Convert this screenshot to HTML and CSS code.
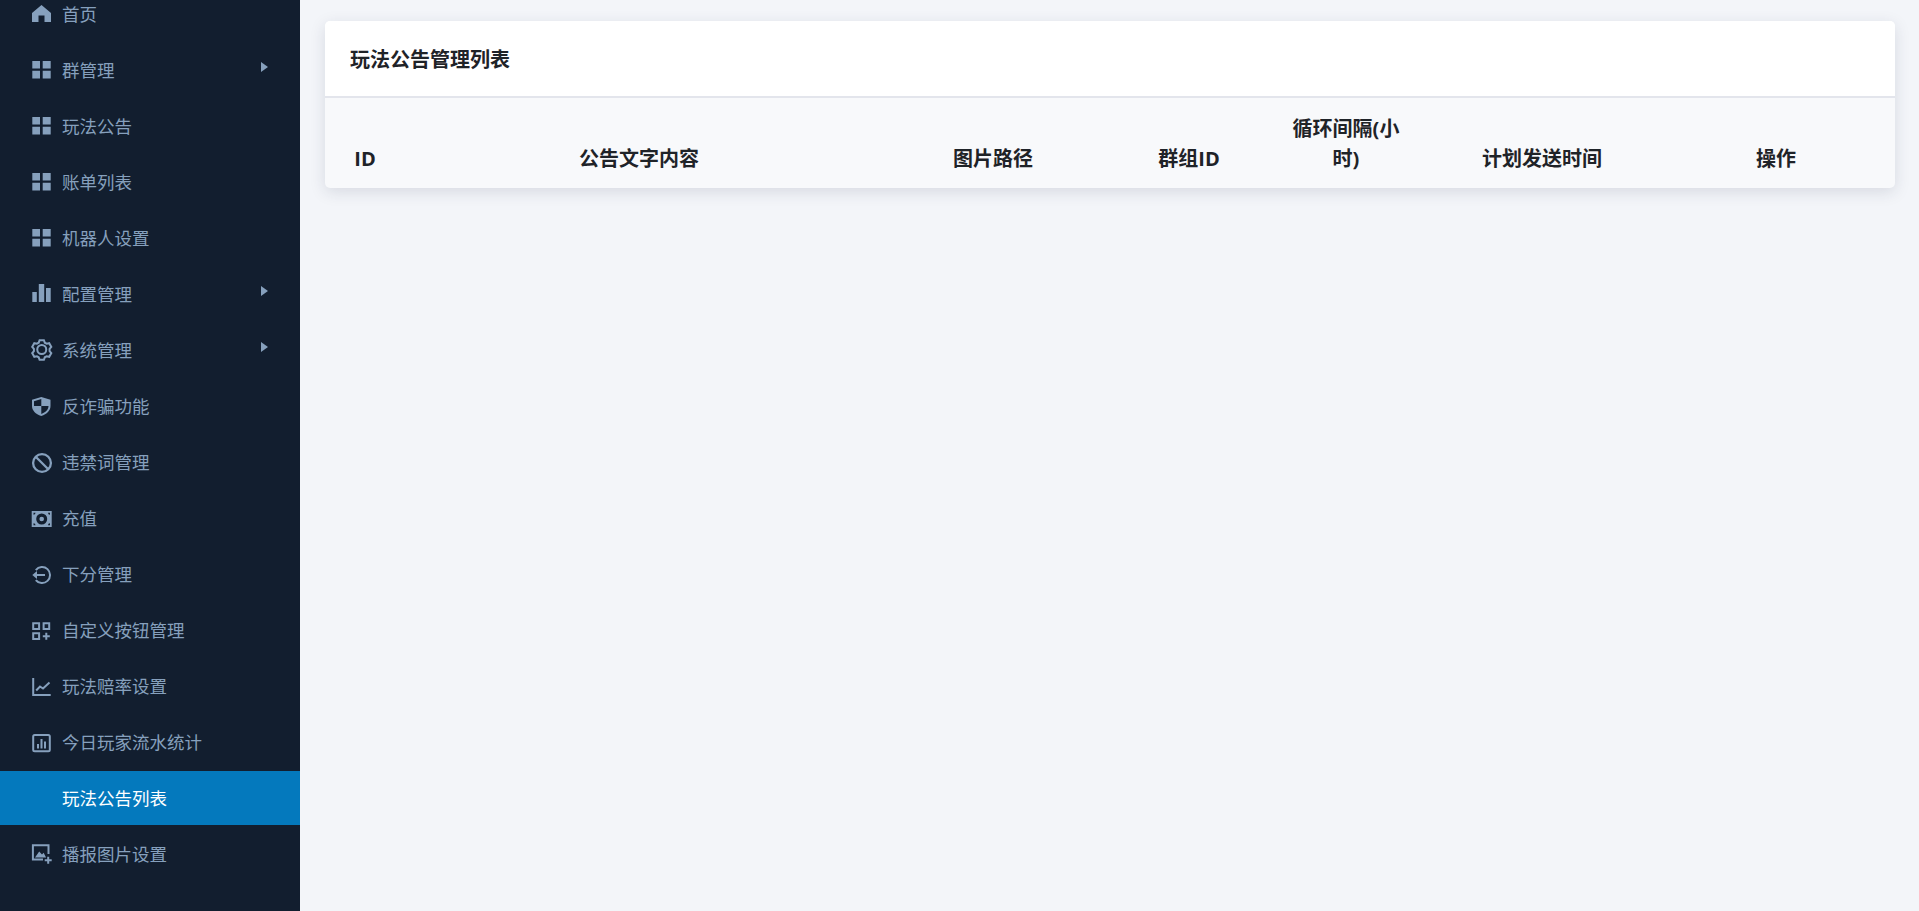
FILE: index.html
```html
<!DOCTYPE html>
<html lang="zh-CN">
<head>
<meta charset="utf-8">
<title>玩法公告管理列表</title>
<link rel="stylesheet" href="styles.css">
</head>
<body>
<div class="layout">
  <aside class="sidebar">
    <ul class="menu">
      <li class="item"><svg class="icon" viewBox="0 0 20 20"><path class="fill" fill-rule="evenodd" d="M9.500 2 19 10v9h-6.500v-6.500h-6V19H0V10Z"/></svg><span class="label">首页</span></li>
      <li class="item"><svg class="icon" viewBox="0 0 20 20"><path class="fill" d="M.3 2H8v7.500H.3zM10.700 2h8v7.500h-8zM.3 11.700H8v7.800H.3zM10.700 11.700h8v7.800h-8z"/></svg><span class="label">群管理</span><i class="caret"></i></li>
      <li class="item"><svg class="icon" viewBox="0 0 20 20"><path class="fill" d="M.3 2H8v7.500H.3zM10.700 2h8v7.500h-8zM.3 11.700H8v7.800H.3zM10.700 11.700h8v7.800h-8z"/></svg><span class="label">玩法公告</span></li>
      <li class="item"><svg class="icon" viewBox="0 0 20 20"><path class="fill" d="M.3 2H8v7.500H.3zM10.700 2h8v7.500h-8zM.3 11.700H8v7.800H.3zM10.700 11.700h8v7.800h-8z"/></svg><span class="label">账单列表</span></li>
      <li class="item"><svg class="icon" viewBox="0 0 20 20"><path class="fill" d="M.3 2H8v7.500H.3zM10.700 2h8v7.500h-8zM.3 11.700H8v7.800H.3zM10.700 11.700h8v7.800h-8z"/></svg><span class="label">机器人设置</span></li>
      <li class="item"><svg class="icon" viewBox="0 0 20 20"><path class="fill" d="M.3 9h4.500v10H.3zM6.800 1h5.400v18H6.800zM14 5h4.700v14H14z"/></svg><span class="label">配置管理</span><i class="caret"></i></li>
      <li class="item"><svg class="icon" viewBox="0 0 20 20"><path class="line" d="M7.600 1.200h4.300l.9 2.500 1.800 1 2.600-.5 2.100 3.700-1.700 2 0 2.200 1.700 2-2.100 3.700-2.600-.5-1.800 1-.9 2.500H7.600l-.9-2.500-1.800-1-2.600.5-2.100-3.700 1.700-2 0-2.200-1.700-2 2.100-3.700 2.600.5 1.800-1z"/><circle class="line" cx="9.750" cy="10.500" r="4.500"/></svg><span class="label">系统管理</span><i class="caret"></i></li>
      <li class="item"><svg class="icon" viewBox="0 0 20 20"><path class="fill" fill-rule="evenodd" d="M9.300 2 18.500 4.700V11c0 4.500-3.500 8-9.200 10C3.500 19 0 15.500 0 11V4.700ZM9.300 4 2 6.200V11H9.300ZM9.300 11V19C13.500 17.500 16.500 14.500 16.500 11Z"/></svg><span class="label">反诈骗功能</span></li>
      <li class="item"><svg class="icon" viewBox="0 0 20 20"><circle class="line thick" cx="10" cy="12" r="8.900"/><path class="line thick" d="M3.700 5.700 16.300 18.300"/></svg><span class="label">违禁词管理</span></li>
      <li class="item"><svg class="icon" viewBox="0 0 20 20"><path class="fill" fill-rule="evenodd" d="M-.3 4h20v16h-20zM9.700 6.500a5.500 5.500 0 1 0 0 11 5.500 5.500 0 0 0 0-11zM9.700 9.700a2.300 2.300 0 1 1 0 4.600 2.300 2.300 0 0 1 0-4.600zM1.500 5.800v2a2 2 0 0 0 2-2zM16 5.800a2 2 0 0 0 2 2v-2zM1.500 16.200v2h2a2 2 0 0 0-2-2zM18 16.200a2 2 0 0 0-2 2h2z"/></svg><span class="label">充值</span></li>
      <li class="item"><svg class="icon" viewBox="0 0 20 20"><path class="line" d="M3.800 7A8 8 0 1 1 3.800 17"/><path class="line" d="M3 12h10"/><path class="fill" d="M.3 12 5 8v8z"/></svg><span class="label">下分管理</span></li>
      <li class="item"><svg class="icon" viewBox="0 0 20 20"><path class="line" d="M1.200 4.200h5.900v5.900H1.200zM11.600 4.200h5.600v5.900h-5.600zM1.200 14.200h5.900v5.900H1.200z"/><path class="line" d="M10.800 17.200h7M14.300 13.800v7"/></svg><span class="label">自定义按钮管理</span></li>
      <li class="item"><svg class="icon" viewBox="0 0 20 20"><path class="line" d="M1.200 3v17h17.500"/><path class="line" d="M4.200 15.500 8 11.500l3 2 6.500-6"/></svg><span class="label">玩法赔率设置</span></li>
      <li class="item"><svg class="icon" viewBox="0 0 20 20"><rect class="line" x="1.200" y="4" width="16.600" height="16.200" rx="1.500"/><path class="fill" d="M5 13h2v4.500H5zM8.500 8h2v9.500h-2zM12 10.500h2v7h-2z"/></svg><span class="label">今日玩家流水统计</span></li>
      <li class="item active"><span class="label">玩法公告列表</span></li>
      <li class="item"><svg class="icon" viewBox="0 0 20 20"><path class="line" d="M16.500 11V2.200H.9v14.300H11"/><path class="fill" d="M3 14.500l4.200-6 2.800 3 1.600-1.700 2.500 4.700z"/><path class="line" d="M12.700 17.200h7M16.200 13.700v7"/></svg><span class="label">播报图片设置</span></li>
    </ul>
  </aside>
  <main class="content">
    <section class="card">
      <header class="card-head"><h1 class="card-title">玩法公告管理列表</h1></header>
      <table class="data">
        <colgroup>
          <col class="c-id"><col class="c-text"><col class="c-path"><col class="c-group"><col class="c-loop"><col class="c-time"><col class="c-op">
        </colgroup>
        <thead>
          <tr>
            <th>ID</th>
            <th>公告文字内容</th>
            <th>图片路径</th>
            <th>群组ID</th>
            <th>循环间隔(小时)</th>
            <th>计划发送时间</th>
            <th>操作</th>
          </tr>
        </thead>
      </table>
    </section>
  </main>
</div>
</body>
</html>
```
FILE: styles.css
```css
* { box-sizing: border-box; }
html, body { margin: 0; height: 100%; overflow: hidden; }
body {
  font-family: "Open Sans", "Noto Sans CJK SC", sans-serif;
  background: #f3f5f9;
  color: #1f2328;
}
.layout { display: flex; height: 100vh; }
.sidebar { width: 300px; flex: none; background: #121e2f; overflow: hidden; }
.menu { list-style: none; margin: -13px 0 0; padding: 0; display: flex; flex-direction: column; gap: 2px; }
.item {
  display: flex;
  align-items: center;
  height: 54px;
  padding-left: 62px;
  position: relative;
  font-size: 17.500px;
  color: #86a0bd;
}
.item.active { background: #0479bd; color: #fff; }
.label { line-height: 24px; }
.icon { position: absolute; left: 32px; top: 16px; width: 20px; height: 20px; overflow: visible; }
.fill { fill: #86a0bd; stroke: none; }
.line { fill: none; stroke: #86a0bd; stroke-width: 2; }
.thick { stroke-width: 2.300; }
.caret {
  position: absolute;
  left: 261px;
  top: 19px;
  border-left: 7px solid #86a0bd;
  border-top: 5px solid transparent;
  border-bottom: 5px solid transparent;
}
.content { flex: 1; padding: 21px 24px 0 25px; min-width: 0; }
.card {
  background: #f8f9fb;
  border-radius: 5px;
  box-shadow: 0 4px 16px rgba(30, 40, 70, .13);
  overflow: hidden;
}
.card-head {
  background: #fff;
  height: 77px;
  padding: 2px 25px 0;
  display: flex;
  align-items: center;
  border-bottom: 2px solid #e3e5ec;
}
.card-title { margin: 0; font-size: 20px; font-weight: 700; line-height: 30px; color: #1f2328; }
.data { width: 100%; table-layout: fixed; border-collapse: collapse; }
.c-id { width: 80px; }
.c-text { width: 468px; }
.c-path { width: 240px; }
.c-group { width: 152px; }
.c-loop { width: 162px; }
.c-time { width: 230px; }
.c-op { width: 238px; }
.data th {
  padding: 16px 24px 14px;
  font-size: 20px;
  font-weight: 700;
  line-height: 30px;
  text-align: center;
  vertical-align: bottom;
  color: #1f2328;
}
```
